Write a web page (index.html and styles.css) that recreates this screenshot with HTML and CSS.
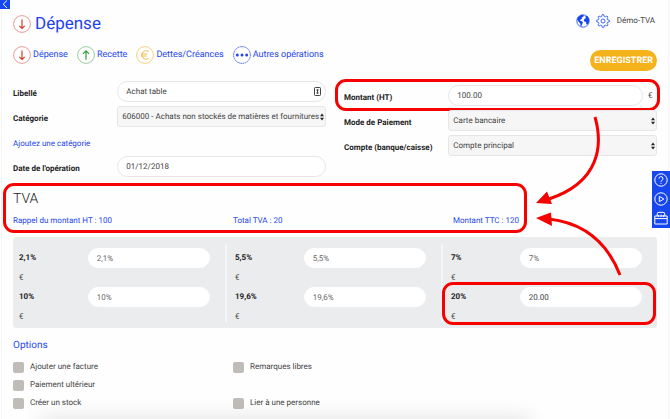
FILE: index.html
```html
<!DOCTYPE html>
<html lang="fr">
<head>
<meta charset="utf-8">
<meta name="viewport" content="width=device-width, initial-scale=1">
<title>Dépense</title>
<link rel="stylesheet" href="styles.css">
</head>
<body>
<svg class="defs" aria-hidden="true">
  <symbol id="down" viewBox="0 0 18 18"><circle cx="9" cy="9" r="8.4" stroke-width=".7" opacity=".7"/><path d="M9 4.5v9M6.3 10.8 9 13.5l2.7-2.7" stroke-width="1.200"/></symbol>
  <symbol id="up" viewBox="0 0 18 18"><circle cx="9" cy="9" r="8.4" stroke-width=".7" opacity=".7"/><path d="M9 13.8v-9M6 7.8l3-3 3 3" stroke-width="1.200"/></symbol>
  <symbol id="euro" viewBox="0 0 18 18"><circle cx="9" cy="9" r="8.4" stroke-width=".7"/><path d="M12.7 5.6A4.3 4.3 0 1 0 12.7 12.4M5 8h6.3M5 10h5.7"/></symbol>
  <symbol id="dots" viewBox="0 0 18 18"><circle cx="9" cy="9" r="8.4" stroke-width=".8" stroke-dasharray="1.6 .6"/><g fill="currentColor" stroke="none"><circle cx="4.3" cy="9" r="1.5"/><circle cx="9" cy="9" r="1.5"/><circle cx="13.7" cy="9" r="1.5"/></g></symbol>
  <symbol id="updown" viewBox="0 0 4 8"><path d="M0 3.2 2 .6l2 2.6zM0 4.8l2 2.6 2-2.6z" fill="#222" stroke="none"/></symbol>
</svg>

<button class="menu-tab" type="button" aria-label="Ouvrir le menu"><svg viewBox="0 0 10 9"><path d="M7 .5 3.2 4.2 7 8"/></svg></button>

<main class="page">
  <header class="header">
    <h1><svg class="round red"><use href="#down"/></svg>Dépense</h1>
    <div class="account">
      <button type="button" aria-label="Langue"><svg viewBox="0 0 14 14"><circle cx="7" cy="7" r="6.2" stroke-width=".8"/><path fill="currentColor" stroke="none" d="M1 5.2C1.8 2.8 4 1 6.4.8L8 1.6 7 3 5.7 3.3 6.2 4.5 4.6 5.4 4 6.7 5.9 7.2 7 8.4 6.2 10 5.4 12.4 4.6 12 4.2 9.6 2.6 7.8ZM9 2.2l2.3-.1A6.3 6.3 0 0 1 13.2 6l-.6 2.9-1.3 1.9-1-.7-.3-2.2-1.7-.4-.6-1.6L8.9 4.5l1.2-.3Z"/></svg></button>
      <button type="button" aria-label="Paramètres"><svg viewBox="0 0 14 14"><path stroke-width=".8" d="M5.8 2.3 6.2.7h1.6l.4 1.6 1.3.5 1.4-.8 1.1 1.1-.8 1.4.5 1.3 1.6.4v1.6l-1.6.4-.5 1.3.8 1.4-1.1 1.1-1.4-.8-1.3.5-.4 1.6H6.2l-.4-1.6-1.3-.5-1.4.8L2 10.900l.8-1.4-.5-1.3-1.6-.4V6.200l1.6-.4.5-1.3L2 3.100 3.100 2l1.4.8Z"/><circle cx="7" cy="7" r="2" stroke-width=".8"/></svg></button>
      <span>Démo-TVA</span>
    </div>
  </header>

  <div class="toolbar">
    <nav class="tabs">
      <a href="#"><svg class="round red"><use href="#down"/></svg>Dépense</a>
      <a href="#"><svg class="round green"><use href="#up"/></svg>Recette</a>
      <a href="#"><svg class="round yellow"><use href="#euro"/></svg>Dettes/Créances</a>
      <a href="#"><svg class="round"><use href="#dots"/></svg>Autres opérations</a>
    </nav>
    <button class="save" type="submit" form="expense">ENREGISTRER</button>
  </div>

  <form id="expense">
    <div class="fields">
      <div class="column">
        <div class="row">
          <label for="libelle">Libellé</label>
          <div class="control"><input id="libelle" type="text" value="Achat table"><svg class="card" viewBox="0 0 7 9"><rect x=".5" y=".5" width="6" height="8" rx=".8"/><path d="M3.500 2.300v4.400M2.300 3h2.400M2.300 6h2.400"/></svg></div>
        </div>
        <div class="row">
          <label for="categorie">Catégorie</label>
          <div class="control"><select id="categorie"><option>606000 - Achats non stockés de matières et fournitures</option></select><svg class="updown"><use href="#updown"/></svg></div>
        </div>
        <div class="row"><a href="#">Ajoutez une catégorie</a></div>
        <div class="row">
          <label for="date">Date de l'opération</label>
          <div class="control"><input id="date" type="text" value="01/12/2018"></div>
        </div>
      </div>
      <div class="column second">
        <div class="row marked">
          <label for="montant">Montant (HT)</label>
          <div class="control amount"><input id="montant" type="text" value="100.00"><span>€</span></div>
        </div>
        <div class="row">
          <label for="paiement">Mode de Paiement</label>
          <div class="control"><select id="paiement"><option>Carte bancaire</option></select><svg class="updown"><use href="#updown"/></svg></div>
        </div>
        <div class="row">
          <label for="compte">Compte (banque/caisse)</label>
          <div class="control"><select id="compte"><option>Compte principal</option></select><svg class="updown"><use href="#updown"/></svg></div>
        </div>
      </div>
    </div>

    <section class="vat">
      <h2>TVA</h2>
      <div class="thirds summary">
        <span>Rappel du montant HT : 100</span>
        <span>Total TVA : 20</span>
        <span>Montant TTC : 120</span>
      </div>
    </section>

    <div class="rates">
      <div class="group">
        <div class="rate"><label for="r1">2,1%</label><input id="r1" type="text" placeholder="2,1%"><span>€</span></div>
        <div class="rate"><label for="r2">10%</label><input id="r2" type="text" placeholder="10%"><span>€</span></div>
      </div>
      <div class="group">
        <div class="rate"><label for="r3">5,5%</label><input id="r3" type="text" placeholder="5,5%"><span>€</span></div>
        <div class="rate"><label for="r4">19,6%</label><input id="r4" type="text" placeholder="19,6%"><span>€</span></div>
      </div>
      <div class="group">
        <div class="rate"><label for="r5">7%</label><input id="r5" type="text" placeholder="7%"><span>€</span></div>
        <div class="rate marked"><label for="r6">20%</label><input id="r6" type="text" value="20.00"><span>€</span></div>
      </div>
    </div>

    <h3>Options</h3>
    <div class="thirds options">
      <div>
        <label><input type="checkbox">Ajouter une facture</label>
        <label><input type="checkbox">Paiement ultérieur</label>
        <label><input type="checkbox">Créer un stock</label>
      </div>
      <div class="spread">
        <label><input type="checkbox">Remarques libres</label>
        <label><input type="checkbox">Lier à une personne</label>
      </div>
    </div>
  </form>

  <svg class="arrows" viewBox="0 0 90 170" aria-hidden="true">
    <path d="M62 7C70 35 67 72 16 89M87 165C78 142 60 114 16 109"/>
    <path class="head" d="M3 93 14 81.500 19 94ZM3 108 18 102.500 19 116Z"/>
  </svg>
</main>

<aside class="side">
  <button type="button" aria-label="Aide"><svg viewBox="0 0 14 14"><circle cx="7" cy="7" r="6.200"/><path d="M5 5.600a2 2 0 1 1 2.900 1.800Q7 7.800 7 8.800M7 9.900v1"/></svg></button>
  <button type="button" aria-label="Vidéo"><svg viewBox="0 0 14 14"><circle cx="7" cy="7" r="6.200"/><path d="M5.300 4.300v5.400L9.800 7Z"/></svg></button>
  <button type="button" aria-label="Boîte à outils"><svg viewBox="0 0 14 14"><path d="M.8 5h12.400v8H.8ZM.8 7.600h12.400M3.200 5V3Q3.200 1.300 5 1.300h4Q10.800 1.300 10.800 3v2M4.400 4v2M7 3.600v2.400M9.600 4v2"/></svg></button>
</aside>
<div class="shade"></div>
</body>
</html>
```
FILE: styles.css
```css
* { box-sizing: border-box; }

body {
  margin: 0;
  min-height: 100vh;
  overflow-x: hidden;
  position: relative;
  background: #fefefe;
  color: #444;
  font: 8px/12px Roboto, "Liberation Sans", sans-serif;
  text-rendering: geometricPrecision;
}

a { color: #2546f0; text-decoration: none; }
h1, h2, h3 { margin: 0; font-weight: 400; }
button { border: 0; padding: 0; background: none; color: inherit; font: inherit; text-rendering: inherit; cursor: pointer; }
svg { display: block; fill: none; stroke: currentColor; }
.defs { position: absolute; width: 0; height: 0; }

.menu-tab {
  position: absolute;
  top: 0;
  left: 0;
  z-index: 1;
  width: 10px;
  height: 9px;
  background: #1546ee;
  color: #fff;
}

.page {
  position: relative;
  min-height: 100vh;
  margin: 0 1px;
  padding: 14px 11px 0;
  border: solid #f5f5f5;
  border-width: 0 1px;
}

.header, .toolbar { display: flex; justify-content: space-between; align-items: flex-start; }
.header { height: 20px; margin-bottom: 12px; }

h1 { display: flex; align-items: center; gap: 4px; color: #1f41ee; font-size: 17px; line-height: 20px; }
.round { flex: none; width: 18px; height: 18px; }
.red { color: #cf3b2e; }
.green { color: #2f9e3f; }
.yellow { color: #f3c04f; }

.account { display: flex; align-items: center; gap: 6px; }
.account button { width: 14px; height: 14px; color: #1546ee; }
.account span { margin: 0 2px 0 1px; }

.tabs { display: flex; gap: 9px; font-size: 9px; }
.tabs a { display: flex; align-items: center; gap: 2px; }

.save {
  margin-top: 4px;
  height: 21px;
  padding: 0 4px;
  border-radius: 11px;
  background: #f4b21b;
  color: #fff;
  font-size: 9px;
  font-weight: 700;
}

.fields { display: grid; grid-template-columns: 1fr 1fr; gap: 18px; margin-top: 10px; }
.second { padding-top: 4px; }
.row { display: grid; grid-template-columns: 1fr 2fr; height: 25px; align-items: center; position: relative; }
.row label { color: #222; font-weight: 700; white-space: nowrap; }
.row > a { white-space: nowrap; }
.control { position: relative; align-self: start; }

input[type="text"], select {
  display: block;
  width: 100%;
  height: 21px;
  margin: 0;
  padding: 0 8px;
  border: 1px solid #e6e6e6;
  border-radius: 11px;
  background: #fff;
  color: #444;
  font: inherit;
  text-rendering: inherit;
}
select {
  appearance: none;
  padding: 0 0 0 4px;
  border-radius: 3px;
  background: #f6f6f6;
}
.updown { position: absolute; right: 2px; top: 7px; width: 4px; height: 8px; pointer-events: none; }
.card { position: absolute; right: 5px; top: 6px; width: 7px; height: 9px; stroke-width: 1; }
.amount { display: grid; grid-template-columns: 1fr 14px; align-items: center; }
.amount span { padding-left: 5px; }

/* Red call-outs around the values being explained */
.marked::after, .vat::after {
  content: "";
  position: absolute;
  border: 3px solid #f60000;
  border-radius: 11px;
  pointer-events: none;
}
.row.marked::after { inset: -6px -3px -1px -9px; }
.vat::after { inset: 2px 130px -6px -10px; }
.rate.marked::after { inset: -5px -14px 1px -9px; }

.vat { position: relative; padding-top: 9px; }
h2 { font-size: 14px; line-height: 18px; font-weight: 300; color: #222; }
.thirds { display: grid; grid-template-columns: repeat(3, 1fr); column-gap: 16px; }
.summary { margin-top: 7px; color: #2546f0; }

.rates {
  display: grid;
  grid-template-columns: repeat(3, 1fr);
  gap: 25px;
  margin-top: 10px;
  padding: 11px 15px 2px 6px;
  border-radius: 3px;
  background: #ebecee;
}
.group { position: relative; }
.group + .group::before {
  content: "";
  position: absolute;
  top: -4px;
  bottom: 4px;
  left: -10px;
  width: 2px;
  background: #f4f5f6;
}
.rate { position: relative; display: grid; grid-template-columns: 36fr 64fr; grid-template-rows: 20px 19px; align-items: center; }
.rate label { color: #222; font-weight: 700; }
.rate input[type="text"] { height: 20px; border-color: #fff; }
::placeholder { color: #666; opacity: 1; }

h3 { margin: 10px 0 6px; color: #2546f0; font-size: 10px; line-height: 16px; }
.options { margin-top: -2px; }
.options label { display: flex; align-items: center; gap: 6px; height: 18px; }
.spread { display: flex; flex-direction: column; justify-content: space-between; }
input[type="checkbox"] { appearance: none; width: 11px; height: 11px; margin: 0; border-radius: 2px; background: #c0bdb9; }

.arrows { position: absolute; top: 110px; right: 45px; width: 90px; height: 170px; stroke: #f60000; stroke-width: 3; pointer-events: none; }
.arrows .head { fill: #f60000; stroke: none; }

.side {
  position: absolute;
  top: 171px;
  right: 0;
  display: grid;
  gap: 5px;
  padding: 2px 2px 3px;
  background: #1546ee;
  color: #fff;
}
.side button { width: 14px; height: 14px; }

.shade {
  position: fixed;
  left: 40px;
  right: 140px;
  bottom: -10px;
  height: 10px;
  box-shadow: 0 0 20px rgba(0, 0, 0, .16);
  pointer-events: none;
}
```
